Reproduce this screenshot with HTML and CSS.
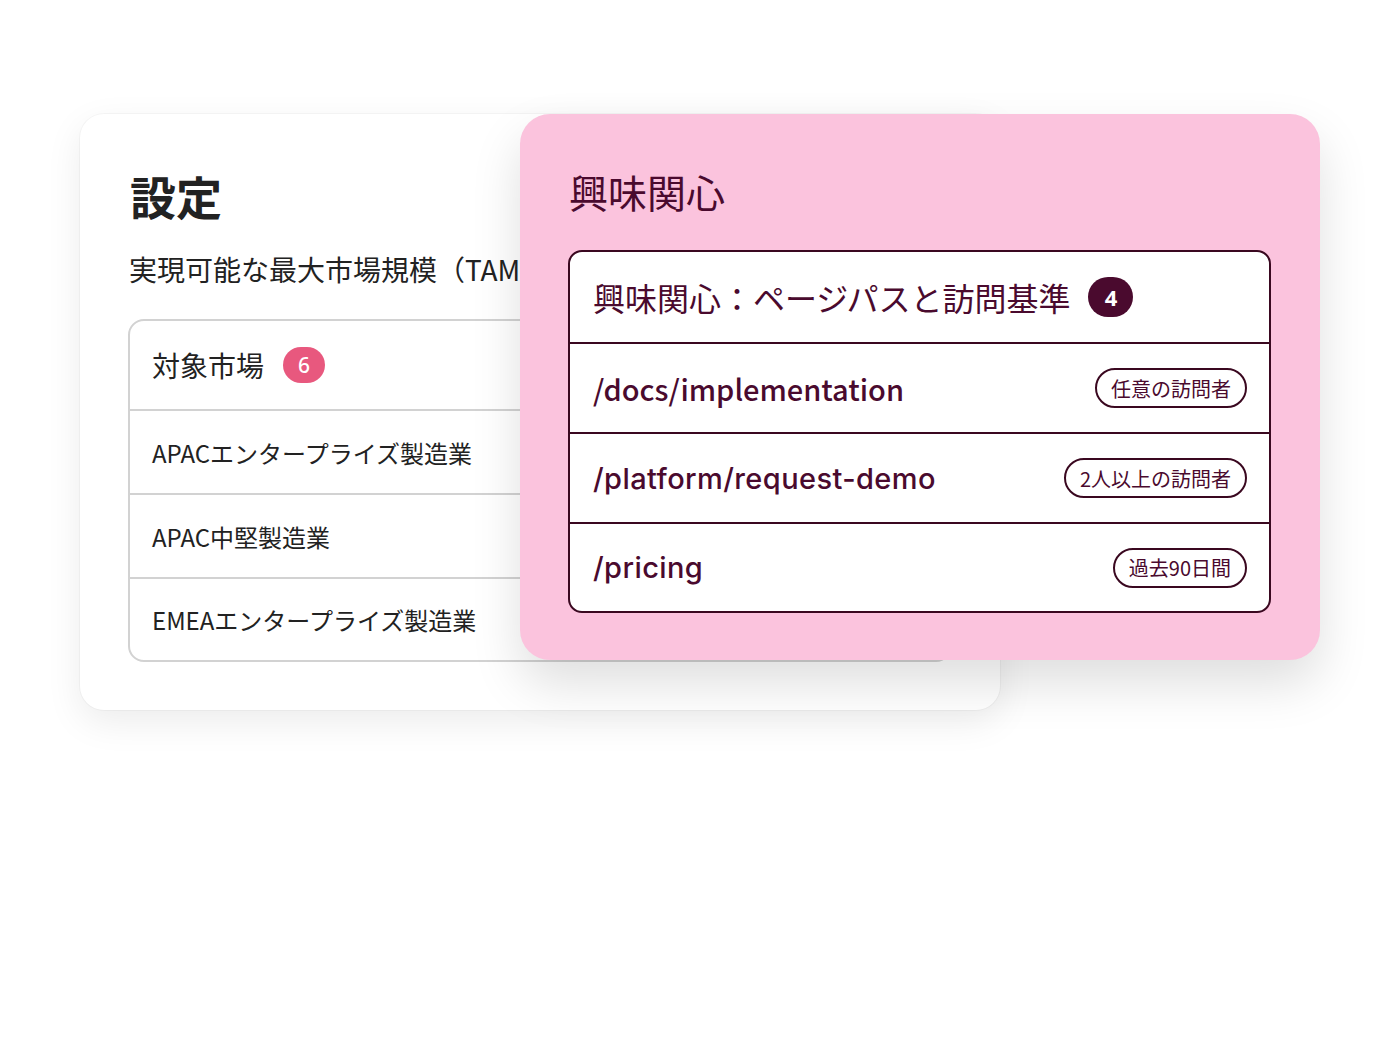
FILE: index.html
```html
<!DOCTYPE html>
<html lang="ja">
<head>
<meta charset="utf-8">
<title>設定</title>
<link rel="stylesheet" href="styles.css">
</head>
<body>
<div class="stage">
  <section class="settings-card">
    <h1 class="settings-title">設定</h1>
    <p class="settings-sub">実現可能な最大市場規模（TAM）</p>
    <div class="market-list">
      <div class="market-head">
        <span>対象市場</span>
        <span class="badge badge-pink">6</span>
      </div>
      <div class="market-row">APACエンタープライズ製造業</div>
      <div class="market-row">APAC中堅製造業</div>
      <div class="market-row">EMEAエンタープライズ製造業</div>
    </div>
  </section>

  <section class="interest-card">
    <h2 class="interest-title">興味関心</h2>
    <div class="interest-list">
      <div class="interest-head">
        <span>興味関心：ページパスと訪問基準</span>
        <span class="badge badge-dark">4</span>
      </div>
      <div class="interest-row">
        <span class="path path-a">/docs/implementation</span>
        <span class="pill">任意の訪問者</span>
      </div>
      <div class="interest-row">
        <span class="path">/platform/request-demo</span>
        <span class="pill">2人以上の訪問者</span>
      </div>
      <div class="interest-row">
        <span class="path">/pricing</span>
        <span class="pill">過去90日間</span>
      </div>
    </div>
  </section>
</div>
</body>
</html>
```

FILE: styles.css
```css
* { box-sizing: border-box; }

html, body {
  margin: 0;
  padding: 0;
  background: #ffffff;
  font-family: "Noto Sans CJK JP", "Noto Sans", sans-serif;
}

.stage {
  position: relative;
  width: 1400px;
  height: 1050px;
  padding: 114px 0 0 80px;
}

/* Left card */
.settings-card {
  width: 920px;
  height: 596px;
  background: #ffffff;
  border-radius: 24px;
  box-shadow: 0 0 0 1px rgba(0,0,0,0.03), 0 12px 36px rgba(0,0,0,0.08);
  padding: 57px 48px 0 48px;
}

.settings-title {
  margin: 0 0 0 2px;
  font-size: 46px;
  line-height: 48px;
  font-weight: 700;
  color: #222222;
}

.settings-sub {
  margin: 30px 0 0 1px;
  font-size: 28px;
  line-height: 40px;
  font-weight: 400;
  color: #222222;
  white-space: nowrap;
}

.market-list {
  margin-top: 30px;
  border: 2px solid #d2d2d2;
  border-radius: 16px;
  overflow: hidden;
}

.market-head {
  height: 90px;
  display: flex;
  align-items: center;
  gap: 19px;
  padding-left: 22px;
  font-size: 28px;
  font-weight: 400;
  color: #222222;
  border-bottom: 2px solid #d2d2d2;
}

.market-row {
  height: 84px;
  display: flex;
  align-items: center;
  padding-left: 22px;
  font-size: 24px;
  font-weight: 400;
  color: #222222;
  border-bottom: 2px solid #d2d2d2;
}

.market-row:last-child {
  border-bottom: none;
  height: 81px;
}

.badge {
  display: inline-flex;
  align-items: center;
  justify-content: center;
  border-radius: 999px;
  color: #ffffff;
  font-family: "Noto Sans", sans-serif;
  font-weight: 500;
}

.badge-pink {
  width: 42px;
  height: 36px;
  background: #e8587e;
  font-size: 21px;
}

.badge-dark {
  width: 45px;
  height: 40px;
  background: #4a0a2e;
  font-size: 22px;
  font-weight: 700;
}

/* Pink card */
.interest-card {
  position: absolute;
  left: 520px;
  top: 114px;
  width: 800px;
  height: 546px;
  background: #fbc3dd;
  border-radius: 30px;
  box-shadow: 0 24px 50px rgba(0,0,0,0.13);
  padding: 52px 48px 0 48px;
}

.interest-title {
  margin: 0 0 0 1px;
  font-size: 39px;
  line-height: 50px;
  font-weight: 400;
  color: #4a0a2e;
}

.interest-list {
  margin-top: 34px;
  width: 703px;
  background: #ffffff;
  border: 2px solid #3a0820;
  border-radius: 14px;
  overflow: hidden;
}

.interest-head {
  height: 92px;
  display: flex;
  align-items: center;
  gap: 18px;
  padding-left: 23px;
  font-size: 32px;
  font-weight: 400;
  color: #4a0a2e;
  border-bottom: 2px solid #3a0820;
}

.interest-row {
  height: 90px;
  display: flex;
  align-items: center;
  justify-content: space-between;
  padding: 0 22px 0 23px;
  border-bottom: 2px solid #3a0820;
}

.interest-row:last-child {
  border-bottom: none;
  height: 87px;
}

.path {
  font-family: "Inter", "Noto Sans", sans-serif;
  font-size: 29px;
  letter-spacing: 0.4px;
  font-weight: 500;
  color: #4a0a2e;
}

.path-a {
  font-family: "Noto Sans CJK JP", "Noto Sans", sans-serif;
  letter-spacing: 0;
}

.pill {
  height: 40px;
  display: inline-flex;
  align-items: center;
  padding: 0 14px;
  border: 2px solid #3a0820;
  border-radius: 20px;
  font-size: 20px;
  color: #4a0a2e;
  white-space: nowrap;
}
```
